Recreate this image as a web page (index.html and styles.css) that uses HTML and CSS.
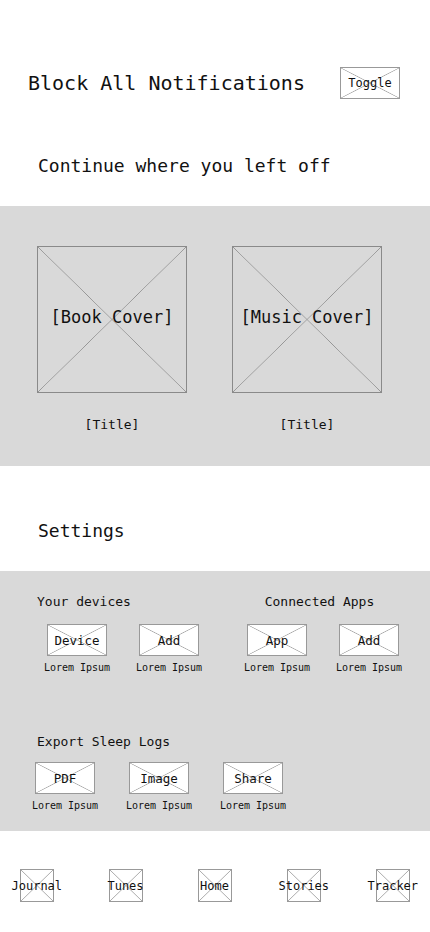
FILE: index.html
```html
<!DOCTYPE html>
<html>
<head>
<meta charset="utf-8">
<link rel="stylesheet" href="styles.css">
</head>
<body>
<div class="page">
  <div class="notif-row">
    <div class="notif-title">Block All Notifications</div>
    <div class="ph ph-small toggle">Toggle</div>
  </div>

  <div class="section-title continue-title">Continue where you left off</div>

  <div class="gray covers">
    <div class="cover-item">
      <div class="ph ph-big cover">[Book Cover]</div>
      <div class="cover-title">[Title]</div>
    </div>
    <div class="cover-item">
      <div class="ph ph-big cover">[Music Cover]</div>
      <div class="cover-title">[Title]</div>
    </div>
  </div>

  <div class="section-title settings-title">Settings</div>

  <div class="gray settings">
    <div class="settings-row">
      <div class="group group-devices">
        <div class="group-title">Your devices</div>
        <div class="items items-devices">
          <div class="item"><div class="ph ph-small box">Device</div><div class="lorem">Lorem Ipsum</div></div>
          <div class="item"><div class="ph ph-small box">Add</div><div class="lorem">Lorem Ipsum</div></div>
        </div>
      </div>
      <div class="group group-apps">
        <div class="group-title center">Connected Apps</div>
        <div class="items items-apps">
          <div class="item"><div class="ph ph-small box">App</div><div class="lorem">Lorem Ipsum</div></div>
          <div class="item"><div class="ph ph-small box">Add</div><div class="lorem">Lorem Ipsum</div></div>
        </div>
      </div>
    </div>
    <div class="group group-export">
      <div class="group-title">Export Sleep Logs</div>
      <div class="items items-export">
        <div class="item"><div class="ph ph-small box">PDF</div><div class="lorem">Lorem Ipsum</div></div>
        <div class="item"><div class="ph ph-small box">Image</div><div class="lorem">Lorem Ipsum</div></div>
        <div class="item"><div class="ph ph-small box">Share</div><div class="lorem">Lorem Ipsum</div></div>
      </div>
    </div>
  </div>

  <nav class="nav">
    <div class="nav-item"><div class="ph ph-small nav-icon"></div><span class="nav-label">Journal</span></div>
    <div class="nav-item"><div class="ph ph-small nav-icon"></div><span class="nav-label">Tunes</span></div>
    <div class="nav-item"><div class="ph ph-small nav-icon"></div><span class="nav-label">Home</span></div>
    <div class="nav-item"><div class="ph ph-small nav-icon"></div><span class="nav-label">Stories</span></div>
    <div class="nav-item"><div class="ph ph-small nav-icon"></div><span class="nav-label">Tracker</span></div>
  </nav>
</div>
</body>
</html>
```
FILE: styles.css
```css
* { box-sizing: border-box; }
html, body { margin: 0; padding: 0; background: #fff; }
body {
  width: 430px;
  font-family: "DejaVu Sans Mono", "Liberation Mono", monospace;
  color: #111;
}

.ph {
  display: flex;
  align-items: center;
  justify-content: center;
  white-space: nowrap;
}
.ph-small {
  background-color: #fff;
  border: 1px solid #999;
  background-image:
    linear-gradient(to top right, transparent calc(50% - 0.7px), #aaa 50%, transparent calc(50% + 0.7px)),
    linear-gradient(to bottom right, transparent calc(50% - 0.7px), #aaa 50%, transparent calc(50% + 0.7px));
}
.ph-big {
  border: 1px solid #8a8a8a;
  background-image:
    linear-gradient(to top right, transparent calc(50% - 0.6px), #959595 50%, transparent calc(50% + 0.6px)),
    linear-gradient(to bottom right, transparent calc(50% - 0.6px), #959595 50%, transparent calc(50% + 0.6px));
}

.notif-row {
  display: flex;
  align-items: center;
  justify-content: space-between;
  margin-top: 67px;
  padding: 0 30px 0 28px;
  height: 32px;
}
.notif-title { font-size: 20px; line-height: 24px; }
.toggle {
  width: 60px;
  height: 32px;
  font-size: 12px;
}

.section-title {
  font-size: 18px;
  line-height: 22px;
  padding-left: 38px;
}
.continue-title { padding-top: 56px; padding-bottom: 29px; }
.settings-title { padding-top: 54px; padding-bottom: 29px; }

.gray { background: #d9d9d9; }

.covers {
  height: 260px;
  display: flex;
  gap: 45px;
  padding: 40px 0 0 37px;
}
.cover-item {
  width: 150px;
  display: flex;
  flex-direction: column;
  align-items: center;
}
.cover {
  width: 150px;
  height: 147px;
  font-size: 17px;
  padding-bottom: 6px;
}
.cover-title {
  margin-top: 24px;
  font-size: 13px;
  line-height: 16px;
}

.settings {
  height: 260px;
  padding-top: 23px;
}
.settings-row {
  display: flex;
  gap: 42px;
  padding-left: 37px;
}
.group-title {
  font-size: 13px;
  line-height: 16px;
  margin-bottom: 14px;
  white-space: nowrap;
}
.group-title.center { text-align: center; padding-right: 7px; }
.items { display: flex; gap: 26px; }
.items-devices { padding-left: 7px; }
.group-apps .items { margin-top: 1px; }
.item {
  width: 66px;
  display: flex;
  flex-direction: column;
  align-items: center;
}
.box {
  width: 60px;
  height: 32px;
  font-size: 12.5px;
}
.lorem {
  margin-top: 6px;
  font-size: 10px;
  line-height: 12px;
  white-space: nowrap;
}

.group-export {
  margin-top: 60px;
  padding-left: 37px;
}
.group-export .group-title { margin-bottom: 12px; }
.items-export { margin-left: -5px; gap: 28px; }

.nav {
  display: flex;
  gap: 39px;
  padding: 38px 0 0 11.5px;
}
.nav-item {
  width: 50px;
  display: grid;
  place-items: center;
}
.nav-icon, .nav-label { grid-area: 1 / 1; }
.nav-icon { width: 34px; height: 33px; }
.nav-label { font-size: 12px; line-height: 14px; white-space: nowrap; }
```
